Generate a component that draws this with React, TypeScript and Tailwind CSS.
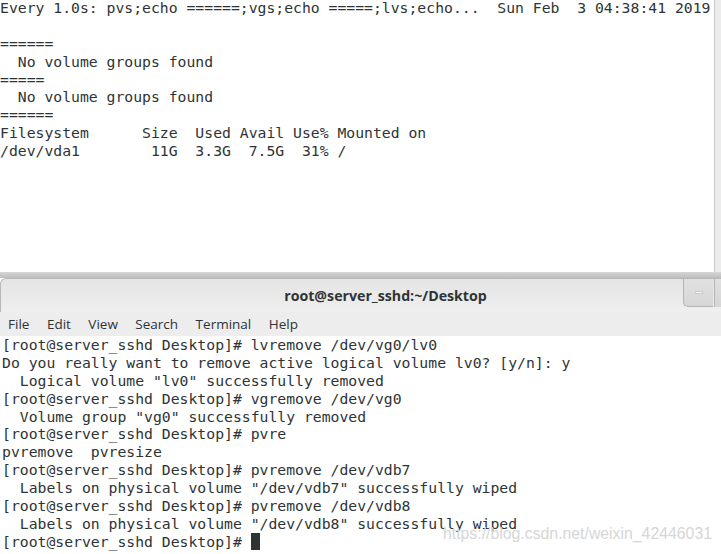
import React from "react";

const mono = { fontFamily: '"DejaVu Sans Mono", monospace' };

const topLines = [
  "Every 1.0s: pvs;echo ======;vgs;echo =====;lvs;echo...  Sun Feb  3 04:38:41 2019",
  "",
  "======",
  "  No volume groups found",
  "=====",
  "  No volume groups found",
  "======",
  "Filesystem      Size  Used Avail Use% Mounted on",
  "/dev/vda1        11G  3.3G  7.5G  31% /",
];

const bottomLines = [
  "[root@server_sshd Desktop]# lvremove /dev/vg0/lv0",
  "Do you really want to remove active logical volume lv0? [y/n]: y",
  '  Logical volume "lv0" successfully removed',
  "[root@server_sshd Desktop]# vgremove /dev/vg0",
  '  Volume group "vg0" successfully removed',
  "[root@server_sshd Desktop]# pvre",
  "pvremove  pvresize",
  "[root@server_sshd Desktop]# pvremove /dev/vdb7",
  '  Labels on physical volume "/dev/vdb7" successfully wiped',
  "[root@server_sshd Desktop]# pvremove /dev/vdb8",
  '  Labels on physical volume "/dev/vdb8" successfully wiped',
];

export default function App() {
  return (
    <div className="w-[721px] h-[554px] overflow-hidden bg-white flex flex-col relative">
      {/* top terminal window */}
      <div className="h-[272px] flex shrink-0">
        <div
          className="flex-1 text-[14.75px] leading-[17.9px] text-[#2e3436] whitespace-pre -mt-[1px]"
          style={mono}
        >
          {topLines.map((l, i) => (
            <div key={i} className="h-[17.9px]">{l}</div>
          ))}
        </div>
        <div className="w-[7px] border-l border-[#c8c8c8] bg-[#ececec]" />
      </div>
      <div className="h-[6px] shrink-0 bg-gradient-to-b from-[#d6d6d6] to-[#bdbdbd]" />

      {/* bottom terminal window */}
      <div className="flex-1 flex flex-col bg-white">
        <div className="h-[34px] shrink-0 rounded-tl-[6px] border-l border-t border-[#b8b8b8] bg-gradient-to-b from-[#e4e4e4] to-[#efefef] flex items-start relative">
          <div
            className="flex-1 text-center pt-[6px] pl-[49px] text-[14.2px] font-bold text-[#2e3436]"
            style={{ fontFamily: '"Open Sans", "DejaVu Sans", sans-serif' }}
          >
            root@server_sshd:~/Desktop
          </div>
          <div className="absolute right-[8px] top-[0px] w-[30px] h-[28px] rounded-bl-[5px] border-l border-b border-[#b4b4b4] bg-gradient-to-b from-[#e0e0e0] to-[#d6d6d6] flex items-center justify-center">
            <div className="w-[8px] h-[3px] bg-[#f4f4f4] border border-[#cccccc]" />
          </div>
          <div className="absolute right-0 top-0 w-[7px] h-[28px] border-l border-[#b4b4b4] bg-gradient-to-b from-[#e0e0e0] to-[#d6d6d6]" />
        </div>
        <div
          className="h-[24px] shrink-0 bg-[#ededed] flex items-center gap-[17.5px] pl-[8px] text-[13.5px] text-[#2e3436]"
          style={{ fontFamily: '"Open Sans", "DejaVu Sans", sans-serif' }}
        >
          <span>File</span>
          <span>Edit</span>
          <span>View</span>
          <span>Search</span>
          <span>Terminal</span>
          <span>Help</span>
        </div>
        <div
          className="flex-1 pl-[2px] text-[14.75px] leading-[17.9px] text-[#2e3436] whitespace-pre"
          style={mono}
        >
          {bottomLines.map((l, i) => (
            <div key={i} className="h-[17.9px]">{l}</div>
          ))}
          <div className="h-[17.9px] flex items-center">
            <span>[root@server_sshd Desktop]# </span>
            <span className="inline-block w-[9px] h-[17px] bg-[#2e3436]" />
          </div>
        </div>
      </div>

      <div
        className="absolute left-[443px] top-[524px] text-[17px] leading-[20px] text-[#d6d6d6] whitespace-nowrap origin-left scale-x-[0.93]"
        style={{ fontFamily: '"Liberation Sans", Arial, sans-serif' }}
      >
        https://blog.csdn.net/weixin_42446031
      </div>
    </div>
  );
}
